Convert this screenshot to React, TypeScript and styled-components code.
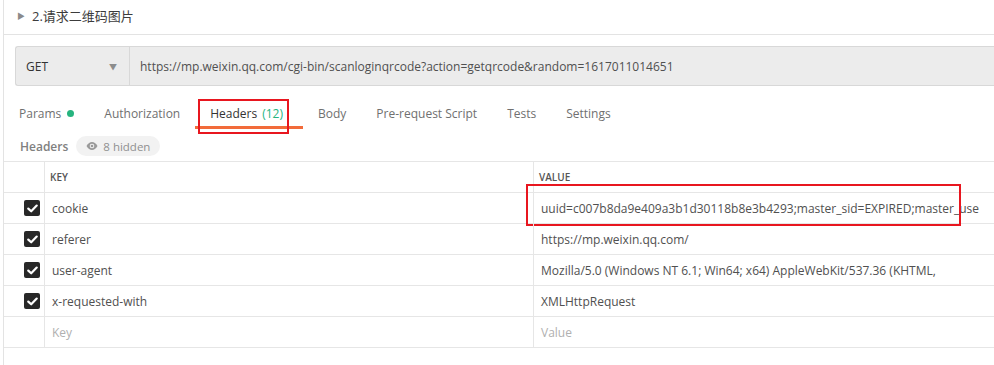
import React from "react";
import styled, {createGlobalStyle} from "styled-components";

const GlobalStyle = createGlobalStyle`
  html, body {
    margin: 0;
    padding: 0;
    background: #fff;
    overflow: hidden;
  }
  body {
    font-family: "Open Sans", "Noto Sans CJK SC", sans-serif;
    color: #505050;
  }
`

const Panel = styled.div`
  margin-left: 3px;
  border-left: 1px solid #e3e3e3;
  min-height: 100vh;
  box-sizing: border-box;
`

const TitleRow = styled.div`
  height: 35px;
  box-sizing: border-box;
  border-bottom: 1px solid #e3e3e3;
  display: flex;
  align-items: center;
  padding: 0 0 3px 13px;
  gap: 7px;
`

const Caret = styled.span`
  font-size: 8px;
  color: #8a8a8a;
`

const Title = styled.span`
  font-size: 13px;
  color: #3c3c3c;
  font-family: "Open Sans", "Noto Sans CJK SC", sans-serif;
`

const UrlRow = styled.div`
  margin: 11px 0 0 11px;
  height: 40px;
  box-sizing: border-box;
  display: flex;
  background: #ececec;
  border: 1px solid #d8d8d8;
  border-right: none;
  border-radius: 3px 0 0 3px;
`

const MethodSelect = styled.div`
  width: 114px;
  box-sizing: border-box;
  border-right: 1px solid #d8d8d8;
  display: flex;
  align-items: center;
  justify-content: space-between;
  padding: 0 12px 0 10px;
  font-size: 12px;
  color: #333;
`

const DropArrow = styled.span`
  font-size: 8px;
  color: #8c8c8c;
`

const UrlText = styled.div`
  flex: 1;
  display: flex;
  align-items: center;
  padding-left: 10px;
  font-size: 12px;
  color: #505050;
  white-space: nowrap;
`

const TabBar = styled.div`
  margin-top: 13px;
  display: flex;
  height: 30px;
`

const Tab = styled.div<{ $active?: boolean }>`
  position: relative;
  padding: 1px ${p => (p.$active ? "20px" : "15px")} 0 15px;
  display: flex;
  align-items: center;
  font-size: 12px;
  color: ${p => (p.$active ? "#333" : "#707070")};
  box-sizing: border-box;
  border-bottom: 3px solid ${p => (p.$active ? "#f26b3a" : "transparent")};
`

const Count = styled.span`
  color: #26b47f;
  margin-left: 5px;
`

const Dot = styled.span`
  width: 7px;
  height: 7px;
  border-radius: 50%;
  background: #26b47f;
  margin-left: 6px;
`

const Highlight = styled.div`
  position: absolute;
  border: 2px solid #e8161f;
  box-sizing: border-box;
  pointer-events: none;
`

const SubRow = styled.div`
  margin: 7px 0 5px 16px;
  display: flex;
  align-items: center;
  gap: 8px;
  height: 20px;
`

const SubLabel = styled.span`
  font-size: 12px;
  font-weight: 600;
  color: #808080;
`

const Pill = styled.span`
  display: flex;
  align-items: center;
  gap: 5px;
  height: 20px;
  padding: 0 10px;
  border-radius: 10px;
  background: #f2f2f2;
  font-size: 11.5px;
  color: #909090;
`

const Table = styled.div`
  border-bottom: 1px solid #e6e6e6;
`

const Row = styled.div`
  display: grid;
  grid-template-columns: 40px 489px 1fr;
  height: 31px;
  box-sizing: border-box;
  border-top: 1px solid #e6e6e6;
`

const CheckCell = styled.div`
  display: flex;
  align-items: center;
  justify-content: flex-end;
  padding-right: 4px;
`

const Cell = styled.div<{ $head?: boolean; $placeholder?: boolean }>`
  position: relative;
  border-left: 1px solid #e6e6e6;
  display: flex;
  align-items: center;
  padding-left: ${p => (p.$head ? "5px" : "7px")};
  font-size: ${p => (p.$head ? "10px" : "12px")};
  font-weight: ${p => (p.$head ? 600 : 400)};
  color: ${p => (p.$head ? "#555" : p.$placeholder ? "#b0b0b0" : "#505050")};
  white-space: nowrap;
`

const Box = styled.span`
  width: 16px;
  height: 16px;
  border-radius: 2px;
  background: #282828;
  display: flex;
  align-items: center;
  justify-content: center;
`

const Check = () => (
    <Box>
        <svg width="11" height="9" viewBox="0 0 11 9">
            <path d="M1.3 4.6 L4.2 7.3 L9.7 1.6" fill="none" stroke="#fff" strokeWidth="2.2" strokeLinecap="round" strokeLinejoin="round"/>
        </svg>
    </Box>
)

const EyeIcon = () => (
    <svg width="12" height="8" viewBox="0 0 12 8">
        <path d="M0.5 4 C2 1.2 4 0 6 0 C8 0 10 1.2 11.5 4 C10 6.8 8 8 6 8 C4 8 2 6.8 0.5 4 Z" fill="#9a9a9a"/>
        <circle cx="6" cy="4" r="2.3" fill="#f2f2f2"/>
        <circle cx="6" cy="4" r="1.3" fill="#9a9a9a"/>
    </svg>
)

const headers = [
    {key: "cookie", value: "uuid=c007b8da9e409a3b1d30118b8e3b4293;master_sid=EXPIRED;master_use", boxed: true},
    {key: "referer", value: "https://mp.weixin.qq.com/"},
    {key: "user-agent", value: "Mozilla/5.0 (Windows NT 6.1; Win64; x64) AppleWebKit/537.36 (KHTML,"},
    {key: "x-requested-with", value: "XMLHttpRequest"},
]

const App: React.FC = () => {
    return (
        <Panel>
            <GlobalStyle/>
            <TitleRow>
                <Caret>▶</Caret>
                <Title>2.请求二维码图片</Title>
            </TitleRow>
            <UrlRow>
                <MethodSelect>
                    GET
                    <DropArrow>▼</DropArrow>
                </MethodSelect>
                <UrlText>https://mp.weixin.qq.com/cgi-bin/scanloginqrcode?action=getqrcode&amp;random=1617011014651</UrlText>
            </UrlRow>
            <TabBar>
                <Tab>Params<Dot/></Tab>
                <Tab>Authorization</Tab>
                <Tab $active>
                    Headers<Count>(12)</Count>
                    <Highlight style={{left: 3, top: 0, width: 91, height: 35}}/>
                </Tab>
                <Tab>Body</Tab>
                <Tab>Pre-request Script</Tab>
                <Tab>Tests</Tab>
                <Tab>Settings</Tab>
            </TabBar>
            <SubRow>
                <SubLabel>Headers</SubLabel>
                <Pill><EyeIcon/>8 hidden</Pill>
            </SubRow>
            <Table>
                <Row>
                    <CheckCell/>
                    <Cell $head>KEY</Cell>
                    <Cell $head>VALUE</Cell>
                </Row>
                {headers.map(h => (
                    <Row key={h.key}>
                        <CheckCell><Check/></CheckCell>
                        <Cell>{h.key}</Cell>
                        <Cell>
                            {h.value}
                            {h.boxed && <Highlight style={{left: -8, top: -9, width: 435, height: 42}}/>}
                        </Cell>
                    </Row>
                ))}
                <Row>
                    <CheckCell/>
                    <Cell $placeholder>Key</Cell>
                    <Cell $placeholder>Value</Cell>
                </Row>
            </Table>
        </Panel>
    )
}

export default App;
